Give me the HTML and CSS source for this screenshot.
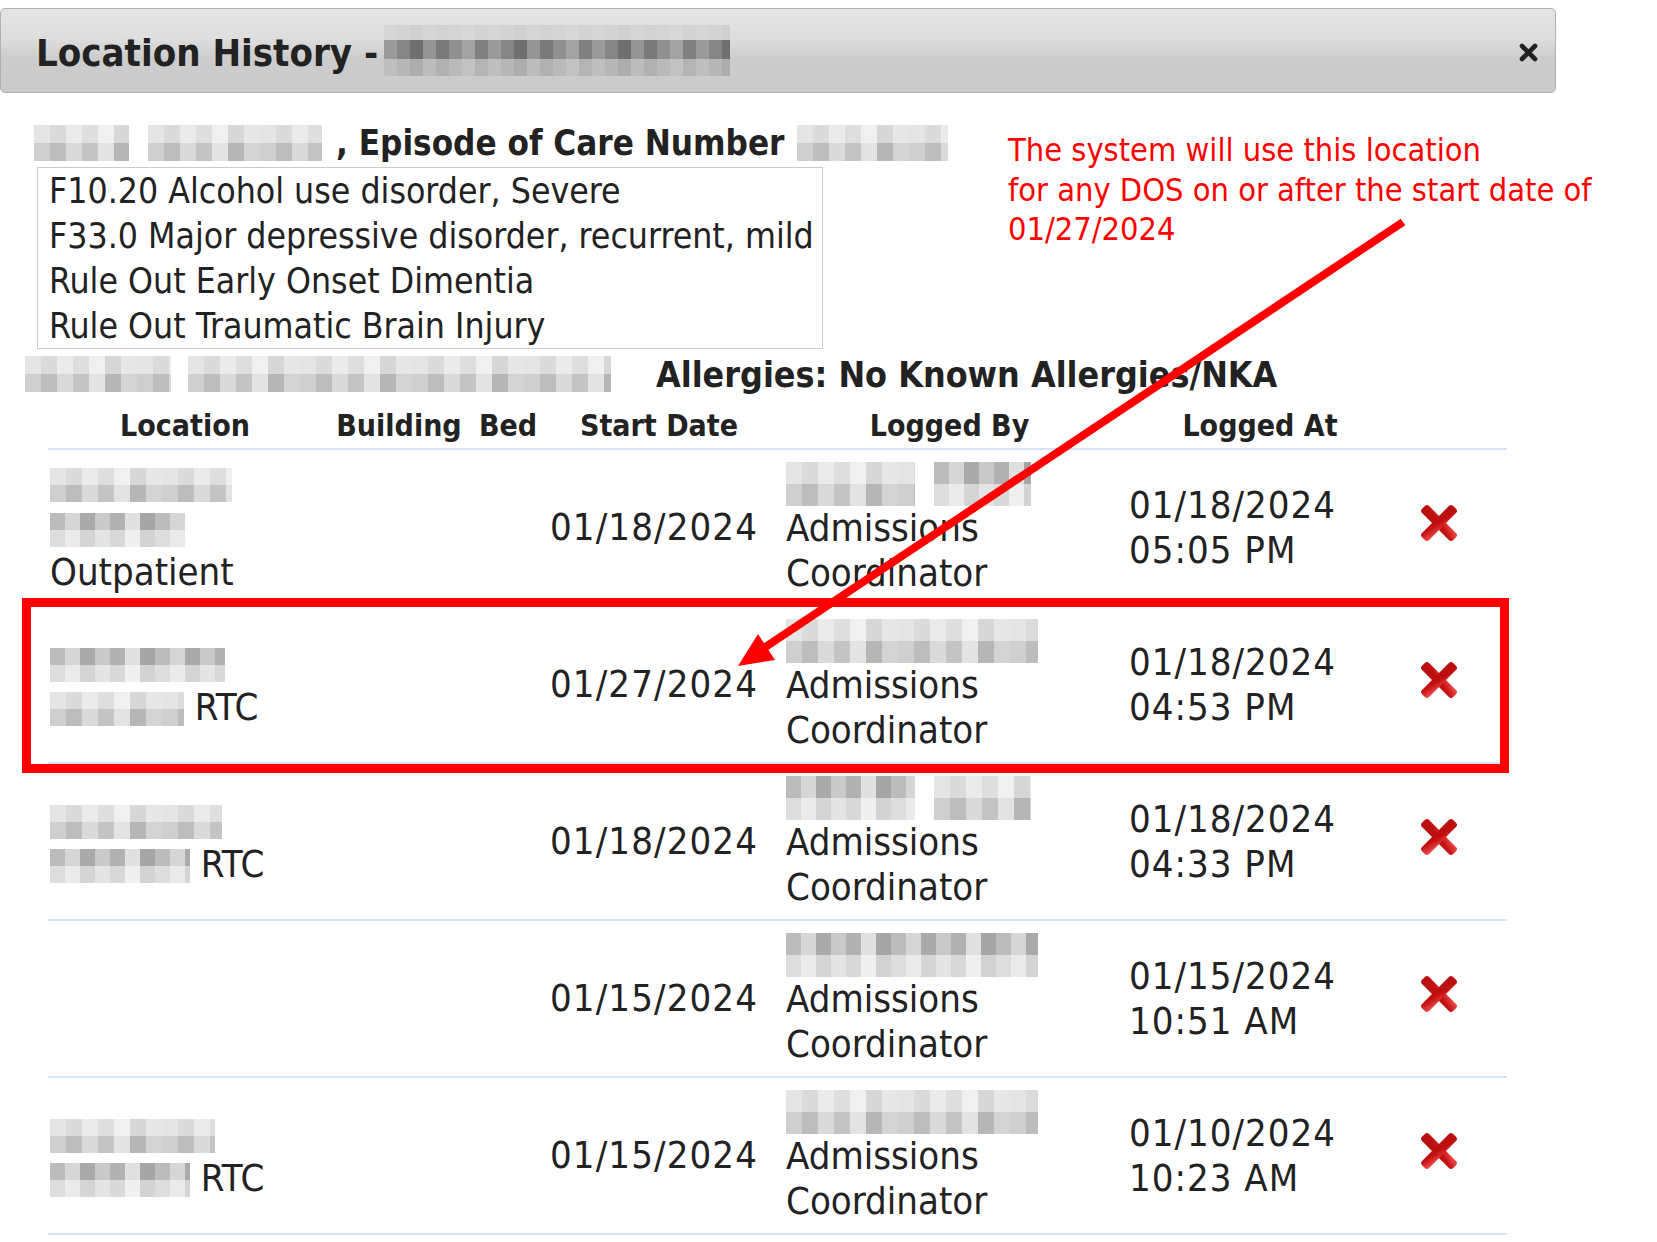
FILE: index.html
```html
<!DOCTYPE html>
<html lang="en">
<head>
<meta charset="utf-8">
<title>Location History</title>
<link rel="stylesheet" href="styles.css">
</head>
<body>
<div class="page">
  <div class="titlebar">
    <span class="title">Location History -</span>
    <span class="px px-title"></span>
    <span class="close" aria-label="close">
      <svg width="19" height="19" viewBox="0 0 19 19"><path d="M3 3 L16 16 M16 3 L3 16" stroke="#222" stroke-width="4.6" stroke-linecap="round"/></svg>
    </span>
  </div>

  <div class="content">
    <div class="episode">
      <span class="px px-e1"></span>
      <span class="px px-e2"></span>
      <span class="ep-text">, Episode of Care Number</span>
      <span class="px px-e3"></span>
    </div>

    <div class="diag">
      <div>F10.20 Alcohol use disorder, Severe</div>
      <div>F33.0 Major depressive disorder, recurrent, mild</div>
      <div>Rule Out Early Onset Dimentia</div>
      <div>Rule Out Traumatic Brain Injury</div>
    </div>

    <div class="allergy">
      <span class="px px-a1"></span>
      <span class="px px-a2"></span>
      <span class="al-text">Allergies: No Known Allergies/NKA</span>
    </div>

    <table class="hist">
      <colgroup>
        <col class="c-loc"><col class="c-bld"><col class="c-bed"><col class="c-start"><col class="c-by"><col class="c-at"><col class="c-del">
      </colgroup>
      <thead>
        <tr><th>Location</th><th>Building</th><th>Bed</th><th>Start Date</th><th>Logged By</th><th>Logged At</th><th></th></tr>
      </thead>
      <tbody>
        <tr>
          <td class="loc"><span class="px px-l" style="width:182px"></span><br><span class="px px-l px-alt" style="width:135px"></span><br>Outpatient</td>
          <td></td><td></td>
          <td class="start">01/18/2024</td>
          <td class="by"><span class="px px-n" style="width:129px"></span><span class="px px-n px-alt gapl" style="width:97px"></span><br>Admissions<br>Coordinator</td>
          <td class="at">01/18/2024<br>05:05 PM</td>
          <td class="del"><svg class="xicon" viewBox="0 0 40 38"><use href="#delx"/></svg></td>
        </tr>
        <tr>
          <td class="loc"><span class="px px-l px-alt" style="width:175px"></span><br><span class="px px-l" style="width:134px"></span> RTC</td>
          <td></td><td></td>
          <td class="start">01/27/2024</td>
          <td class="by"><span class="px px-n" style="width:252px"></span><br>Admissions<br>Coordinator</td>
          <td class="at">01/18/2024<br>04:53 PM</td>
          <td class="del"><svg class="xicon" viewBox="0 0 40 38"><use href="#delx"/></svg></td>
        </tr>
        <tr>
          <td class="loc"><span class="px px-l" style="width:172px"></span><br><span class="px px-l px-alt" style="width:140px"></span> RTC</td>
          <td></td><td></td>
          <td class="start">01/18/2024</td>
          <td class="by"><span class="px px-n px-alt" style="width:129px"></span><span class="px px-n gapl" style="width:97px"></span><br>Admissions<br>Coordinator</td>
          <td class="at">01/18/2024<br>04:33 PM</td>
          <td class="del"><svg class="xicon" viewBox="0 0 40 38"><use href="#delx"/></svg></td>
        </tr>
        <tr>
          <td class="loc"></td>
          <td></td><td></td>
          <td class="start">01/15/2024</td>
          <td class="by"><span class="px px-n px-alt" style="width:252px"></span><br>Admissions<br>Coordinator</td>
          <td class="at">01/15/2024<br>10:51 AM</td>
          <td class="del"><svg class="xicon" viewBox="0 0 40 38"><use href="#delx"/></svg></td>
        </tr>
        <tr>
          <td class="loc"><span class="px px-l" style="width:165px"></span><br><span class="px px-l px-alt" style="width:140px"></span> RTC</td>
          <td></td><td></td>
          <td class="start">01/15/2024</td>
          <td class="by"><span class="px px-n" style="width:252px"></span><br>Admissions<br>Coordinator</td>
          <td class="at">01/10/2024<br>10:23 AM</td>
          <td class="del"><svg class="xicon" viewBox="0 0 40 38"><use href="#delx"/></svg></td>
        </tr>
      </tbody>
    </table>
  </div>

  <div class="note">The system will use this location<br>for any DOS on or after the start date of<br>01/27/2024</div>
  <div class="highlight"></div>
  <svg class="arrow" width="1657" height="1242" viewBox="0 0 1657 1242">
    <line x1="1403" y1="222" x2="764" y2="648" stroke="#ff0000" stroke-width="8"/>
    <polygon points="738,666 758,634 775,660" fill="#ff0000"/>
  </svg>

  <svg width="0" height="0" class="defs">
    <defs>
      <linearGradient id="xg" x1="0" y1="0" x2="1" y2="1">
        <stop offset="0" stop-color="#b01212"/>
        <stop offset="0.5" stop-color="#c20e0e"/>
        <stop offset="1" stop-color="#f25050"/>
      </linearGradient>
      <g id="delx">
        <rect x="15" y="-3" width="10" height="44" rx="3" fill="url(#xg)" transform="rotate(-45 20 19)"/>
        <rect x="15" y="-3" width="10" height="44" rx="3" fill="url(#xg)" transform="rotate(45 20 19)"/>
      </g>
    </defs>
  </svg>
</div>
</body>
</html>
```

FILE: styles.css
```css
html, body {
  margin: 0;
  padding: 0;
  background: #ffffff;
}

.page {
  position: relative;
  width: 1657px;
  height: 1242px;
  overflow: hidden;
  font-family: "DejaVu Sans Condensed", "DejaVu Sans", sans-serif;
  font-stretch: condensed;
  color: #222222;
}

.titlebar {
  margin-top: 8px;
  width: 1556px;
  height: 85px;
  box-sizing: border-box;
  border: 1px solid #b0b0b0;
  border-radius: 5px;
  background: linear-gradient(180deg, #e4e4e4 0%, #dedede 35%, #cccccc 60%, #cbcbcb 100%);
  display: flex;
  align-items: center;
  padding-left: 35px;
  padding-right: 17px;
  padding-top: 4px;
}

.title {
  font-weight: bold;
  font-size: 38px;
  color: #222222;
  white-space: nowrap;
}

.close {
  margin-left: auto;
  display: flex;
  align-items: center;
}

.px {
  display: inline-block;
  vertical-align: middle;
  background:
    linear-gradient(180deg, rgba(255,255,255,0.45) 0 50%, rgba(255,255,255,0) 50% 100%),
    repeating-linear-gradient(90deg, #cfcfcf 0 16px, #bdbdbd 16px 32px, #dadada 32px 48px, #c4c4c4 48px 64px, #e3e3e3 64px 80px, #b6b6b6 80px 96px, #d4d4d4 96px 112px);
}

.px-alt {
  background:
    linear-gradient(180deg, rgba(255,255,255,0) 0 50%, rgba(255,255,255,0.5) 50% 100%),
    repeating-linear-gradient(90deg, #bcbcbc 0 15px, #d6d6d6 15px 30px, #aaaaaa 30px 45px, #c9c9c9 45px 60px, #b1b1b1 60px 75px, #e0e0e0 75px 90px, #a6a6a6 90px 105px);
}

.px-title {
  width: 346px;
  height: 51px;
  margin-left: 6px;
  margin-top: -4px;
  background:
    linear-gradient(180deg, rgba(225,225,225,0.85) 0 30%, rgba(0,0,0,0) 30% 66%, rgba(215,215,215,0.6) 66% 100%),
    repeating-linear-gradient(90deg, #9a9a9a 0 13px, #858585 13px 26px, #6f6f6f 26px 39px, #959595 39px 52px, #7a7a7a 52px 65px, #8f8f8f 65px 78px, #a3a3a3 78px 91px, #808080 91px 104px);
}

.content {
  display: flex;
  flex-direction: column;
}

.episode {
  display: flex;
  align-items: center;
  height: 36px;
  margin-top: 32px;
  padding-left: 34px;
}

.px-e1 { width: 95px; height: 36px; }
.px-e2 { width: 174px; height: 36px; margin-left: 19px; }
.px-e3 { width: 151px; height: 36px; margin-left: 13px; }

.ep-text {
  font-weight: bold;
  font-size: 34.7px;
  margin-left: 14px;
  white-space: nowrap;
}

.diag {
  margin-top: 6px;
  margin-left: 37px;
  width: 786px;
  box-sizing: border-box;
  border: 1px solid #cccccc;
  padding-left: 11px;
  font-size: 35.3px;
  line-height: 45px;
  color: #222222;
}

.allergy {
  display: flex;
  align-items: center;
  height: 36px;
  margin-top: 7px;
  padding-left: 25px;
}

.px-a1 { width: 146px; height: 36px; }
.px-a2 { width: 423px; height: 36px; margin-left: 17px; }

.al-text {
  font-weight: bold;
  font-size: 35.5px;
  margin-left: 45px;
  white-space: nowrap;
}

.hist {
  margin-left: 48px;
  width: 1459px;
  table-layout: fixed;
  border-collapse: collapse;
  border-spacing: 0;
}

.c-loc { width: 274px; }
.c-bld { width: 154px; }
.c-bed { width: 64px; }
.c-start { width: 238px; }
.c-by { width: 343px; }
.c-at { width: 278px; }
.c-del { width: 108px; }

.hist th {
  font-weight: bold;
  font-size: 30px;
  line-height: 36px;
  padding: 16px 0 4px 0;
  text-align: center;
  white-space: nowrap;
  border-bottom: 2px solid #d5e3f6;
}

.hist td {
  height: 157px;
  box-sizing: border-box;
  padding: 0;
  font-size: 38px;
  line-height: 44.5px;
  vertical-align: middle;
  border-bottom: 2px solid #d5e3f6;
  white-space: nowrap;
}

.hist td.loc { padding-left: 2px; }
.hist td.start { padding-left: 10px; letter-spacing: 1.1px; }
.hist td.by { padding-left: 8px; }
.hist td.at { padding-left: 8px; letter-spacing: 1px; }
.hist td.del { padding-left: 20px; }

.px-l { height: 34px; }
.px-n { height: 44px; }
.gapl { margin-left: 19px; }

.xicon {
  display: block;
  width: 40px;
  height: 38px;
  margin-top: -10px;
}

.note {
  position: absolute;
  left: 1008px;
  top: 131px;
  font-size: 32.3px;
  line-height: 39.6px;
  color: #ff0000;
  white-space: nowrap;
}

.highlight {
  position: absolute;
  left: 22px;
  top: 598px;
  width: 1487px;
  height: 175px;
  box-sizing: border-box;
  border: 9px solid #ff0000;
}

.arrow {
  position: absolute;
  left: 0;
  top: 0;
  pointer-events: none;
}

.defs {
  position: absolute;
}
```
